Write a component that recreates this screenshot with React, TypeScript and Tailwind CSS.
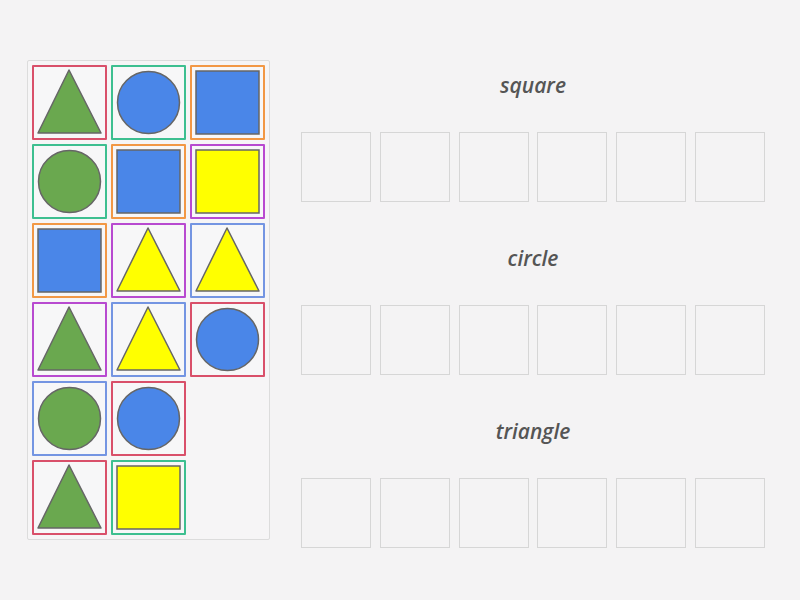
import React from "react";

type Shape = "triangle" | "circle" | "square";

interface tile {
  shape: Shape,
  fill: string,
  border: string,
}

const RED = "border-[#d9506a]";
const TEAL = "border-[#3dbf90]";
const ORANGE = "border-[#f29845]";
const PURPLE = "border-[#b84ad0]";
const BLUE = "border-[#7495e2]";

const GREEN_FILL = "#6aa84f";
const BLUE_FILL = "#4a86e8";
const YELLOW_FILL = "#ffff00";

// null leaves a cell of the grid empty
const tiles: Array<tile | null> = [
  { shape: "triangle", fill: GREEN_FILL, border: RED },
  { shape: "circle", fill: BLUE_FILL, border: TEAL },
  { shape: "square", fill: BLUE_FILL, border: ORANGE },
  { shape: "circle", fill: GREEN_FILL, border: TEAL },
  { shape: "square", fill: BLUE_FILL, border: ORANGE },
  { shape: "square", fill: YELLOW_FILL, border: PURPLE },
  { shape: "square", fill: BLUE_FILL, border: ORANGE },
  { shape: "triangle", fill: YELLOW_FILL, border: PURPLE },
  { shape: "triangle", fill: YELLOW_FILL, border: BLUE },
  { shape: "triangle", fill: GREEN_FILL, border: PURPLE },
  { shape: "triangle", fill: YELLOW_FILL, border: BLUE },
  { shape: "circle", fill: BLUE_FILL, border: RED },
  { shape: "circle", fill: GREEN_FILL, border: BLUE },
  { shape: "circle", fill: BLUE_FILL, border: RED },
  null,
  { shape: "triangle", fill: GREEN_FILL, border: RED },
  { shape: "square", fill: YELLOW_FILL, border: TEAL },
  null,
]

const groups = ["square", "circle", "triangle"]

const ShapeIcon = ({ shape, fill }: { shape: Shape, fill: string }) => {
  // tile is 75px with a 2px border, so svg box is 71
  return (
    <svg width="71" height="71" viewBox="2 2 71 71">
      {shape === "triangle" && (
        <polygon points="37,5 69,68 6,68" fill={fill} stroke="#666" strokeWidth="1.5" strokeLinejoin="round" />
      )}
      {shape === "circle" && (
        <circle cx="37.5" cy="37.5" r="31" fill={fill} stroke="#666" strokeWidth="1.5" />
      )}
      {shape === "square" && (
        <rect x="6" y="6" width="63" height="63" fill={fill} stroke="#666" strokeWidth="1.5" />
      )}
    </svg>
  )
}

const App = () => {
  return (
    <div className="w-[800px] h-[600px] bg-[#f4f3f4] overflow-hidden" style={{ fontFamily: '"Open Sans", "Noto Sans", sans-serif' }}>
      <div className="flex items-start pt-[60px] pl-[27px]">
        <div className="w-[243px] h-[480px] border border-[#dcdcdc] bg-[#f6f5f6] p-[4px] rounded-[2px]">
          <div className="grid grid-cols-[75px_75px_75px] auto-rows-[75px] gap-[4px]">
            {tiles.map((t, i) => t ? (
              <div key={i} className={`border-2 ${t.border} bg-[#f7f7f8] rounded-[1px]`}>
                <ShapeIcon shape={t.shape} fill={t.fill} />
              </div>
            ) : (
              <div key={i} />
            ))}
          </div>
        </div>

        <div className="ml-[31px] mt-[6px] w-[464px] flex flex-col gap-[37px]">
          {groups.map(g => (
            <div key={g} className="flex flex-col">
              <div className="h-[40px] mb-[26px] flex items-center justify-center text-[21px] italic font-semibold text-[#555]">
                {g}
              </div>
              <div className="flex justify-between">
                {[0, 1, 2, 3, 4, 5].map(n => (
                  <div key={n} className="w-[70px] h-[70px] border border-[#d6d6d6] bg-[#f4f3f4]" />
                ))}
              </div>
            </div>
          ))}
        </div>
      </div>
    </div>
  )
}

export default App
